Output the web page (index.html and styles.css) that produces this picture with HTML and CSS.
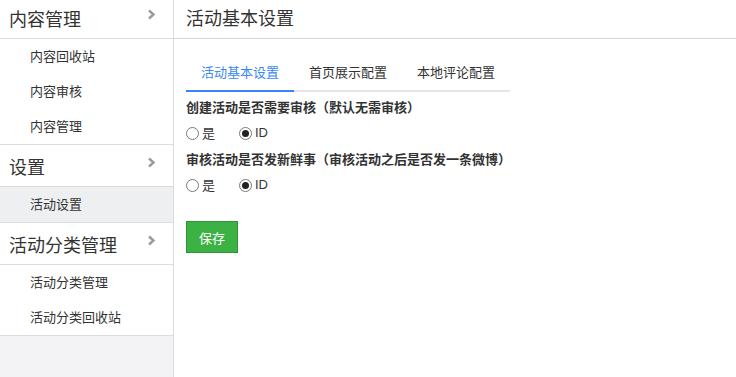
FILE: index.html
```html
<!DOCTYPE html>
<html lang="zh-CN">
<head>
<meta charset="UTF-8" />
<meta name="viewport" content="width=device-width, initial-scale=1.0" />
<title>活动基本设置</title>
<link rel="stylesheet" href="styles.css">
</head>
<body>
<div class="page">
<div class="sidebar">
<div class="group">
<div class="group-head">内容管理<svg class="chevron" width="9" height="11" viewBox="0 0 9 11"><path d="M2 1.5 L6.5 5.5 L2 9.5" /></svg></div>
<ul class="group-items">
<li>内容回收站</li>
<li>内容审核</li>
<li>内容管理</li>
</ul>
</div>
<div class="group">
<div class="group-head">设置<svg class="chevron" width="9" height="11" viewBox="0 0 9 11"><path d="M2 1.5 L6.5 5.5 L2 9.5" /></svg></div>
<ul class="group-items">
<li class="active">活动设置</li>
</ul>
</div>
<div class="group">
<div class="group-head">活动分类管理<svg class="chevron" width="9" height="11" viewBox="0 0 9 11"><path d="M2 1.5 L6.5 5.5 L2 9.5" /></svg></div>
<ul class="group-items">
<li>活动分类管理</li>
<li>活动分类回收站</li>
</ul>
</div>
</div>
<div class="main">
<h1 class="title">活动基本设置</h1>
<div class="content">
<ul class="tabs">
<li class="tab current">活动基本设置</li>
<li class="tab">首页展示配置</li>
<li class="tab">本地评论配置</li>
</ul>
<form class="form">
<p class="field-label">创建活动是否需要审核（默认无需审核）</p>
<div class="radios">
<label><input type="radio" name="audit"> 是</label>
<label><input type="radio" name="audit" checked> ID</label>
</div>
<p class="field-label">审核活动是否发新鲜事（审核活动之后是否发一条微博）</p>
<div class="radios">
<label><input type="radio" name="feed"> 是</label>
<label><input type="radio" name="feed" checked> ID</label>
</div>
<button type="button" class="btn-save">保存</button>
</form>
</div>
</div>
</div>
</body>
</html>
```

FILE: styles.css
```css
* {
margin: 0;
padding: 0;
box-sizing: border-box;
}
html, body {
height: 100%;
overflow: hidden;
}
body {
font-family: "Noto Sans CJK SC", "Liberation Sans", sans-serif;
font-size: 13px;
color: #333;
background: #fff;
}
.page {
display: flex;
margin-top: -3px;
min-height: calc(100% + 3px);
}
.sidebar {
width: 174px;
flex-shrink: 0;
background: #f3f3f5;
border-right: 1px solid #dcdcdc;
}
.group {
background: #fff;
border-bottom: 1px solid #dcdcdc;
}
.group-head {
height: 42px;
padding: 0 9px;
display: flex;
align-items: center;
justify-content: space-between;
font-size: 18px;
border-bottom: 1px solid #dcdcdc;
}
.chevron {
margin-right: 8px;
margin-top: -7px;
}
.chevron path {
fill: none;
stroke: #9a9a9a;
stroke-width: 2.4;
}
.group-items {
list-style: none;
}
.group-items li {
height: 35px;
line-height: 33px;
padding-left: 30px;
}
.group-items li.active {
background: #eeeff1;
}
.main {
flex: 1;
}
.title {
height: 42px;
line-height: 41px;
padding-left: 12px;
font-size: 18px;
font-weight: normal;
border-bottom: 1px solid #d4d4d4;
}
.content {
padding: 0 12px;
}
.tabs {
display: flex;
list-style: none;
width: 324px;
margin-top: 15px;
border-bottom: 2px solid #e5e5e5;
}
.tab {
height: 36px;
line-height: 36px;
padding: 0 15px;
margin-bottom: -2px;
border-bottom: 2px solid transparent;
}
.tab.current {
color: #3a87f5;
border-bottom-color: #3485ff;
height: 38px;
}
.field-label {
font-weight: bold;
line-height: 20px;
margin-top: 5px;
font-kerning: none;
text-spacing-trim: space-all;
}
.radios {
display: flex;
margin: 6px 0;
line-height: 20px;
}
.radios + .field-label {
margin-top: 0;
}
.radios label {
display: flex;
align-items: center;
width: 53px;
}
.radios label:last-child {
font-family: "Liberation Sans", sans-serif;
}
.radios input {
appearance: none;
width: 13px;
height: 13px;
margin-right: 3px;
border: 1px solid #7a7a7a;
border-radius: 50%;
background: #fff;
position: relative;
}
.radios input:checked::after {
content: "";
position: absolute;
left: 2px;
top: 2px;
width: 7px;
height: 7px;
border-radius: 50%;
background: #222;
}
.btn-save {
display: block;
margin-top: 26px;
width: 52px;
height: 32px;
background: #3cb244;
border: 1px solid #2e9436;
color: #fff;
font-family: "Noto Sans CJK SC", sans-serif;
font-size: 13px;
cursor: pointer;
}
```
